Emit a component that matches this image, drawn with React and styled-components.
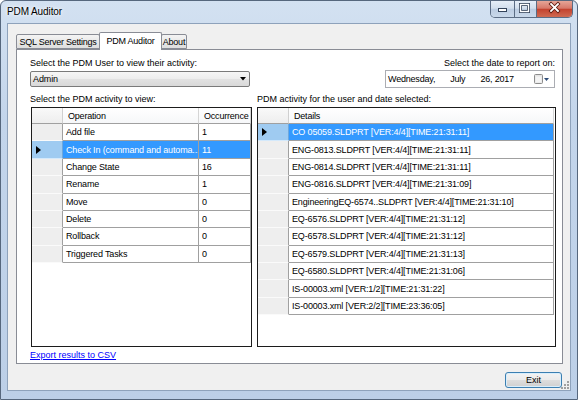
import React from 'react';
import styled, { createGlobalStyle } from 'styled-components';

const FONT = '"Liberation Sans", Arial, sans-serif';

const GlobalStyle = createGlobalStyle`
  html, body {
    margin: 0;
    padding: 0;
    background: #ffffff;
  }
  body {
    font-family: ${FONT};
    font-size: 9px;
    color: #000000;
  }
  * {
    box-sizing: border-box;
  }
`;

const operations = [
  { name: 'Add file', count: 1 },
  { name: 'Check In (command and automa...', count: 11, selected: true },
  { name: 'Change State', count: 16 },
  { name: 'Rename', count: 1 },
  { name: 'Move', count: 0 },
  { name: 'Delete', count: 0 },
  { name: 'Rollback', count: 0 },
  { name: 'Triggered Tasks', count: 0 },
];

const details = [
  'CO 05059.SLDPRT [VER:4/4][TIME:21:31:11]',
  'ENG-0813.SLDPRT [VER:4/4][TIME:21:31:11]',
  'ENG-0814.SLDPRT [VER:4/4][TIME:21:31:11]',
  'ENG-0816.SLDPRT [VER:4/4][TIME:21:31:09]',
  'EngineeringEQ-6574..SLDPRT [VER:4/4][TIME:21:31:10]',
  'EQ-6576.SLDPRT [VER:4/4][TIME:21:31:12]',
  'EQ-6578.SLDPRT [VER:4/4][TIME:21:31:12]',
  'EQ-6579.SLDPRT [VER:4/4][TIME:21:31:13]',
  'EQ-6580.SLDPRT [VER:4/4][TIME:21:31:06]',
  'IS-00003.xml [VER:1/2][TIME:21:31:22]',
  'IS-00003.xml [VER:2/2][TIME:23:36:05]',
];

function RowArrow() {
  return (
    <svg width="5" height="8" viewBox="0 0 5 8">
      <polygon points="0,0 5,4 0,8" fill="#000" />
    </svg>
  );
}

export default function App() {
  return (
    <>
      <GlobalStyle />
      <Window>
        <TitleBar>
          <Title>PDM Auditor</Title>
          <CaptionButtons>
            <CaptionButton $width={23}>
              <svg width="23" height="16" viewBox="0 0 23 16">
                <rect x="7.5" y="7.5" width="8" height="3" fill="#fff" stroke="#33435a" />
              </svg>
            </CaptionButton>
            <CaptionButton $width={22} $divider>
              <svg width="22" height="16" viewBox="0 0 22 16">
                <rect x="5.5" y="3.5" width="8" height="7" fill="none" stroke="#33435a" strokeWidth="3" />
                <rect x="5.5" y="3.5" width="8" height="7" fill="none" stroke="#fff" strokeWidth="1.4" />
              </svg>
            </CaptionButton>
            <CaptionButton $width={36} $close>
              <svg width="36" height="16" viewBox="0 0 36 16">
                <path d="M14 3 L21 10 M21 3 L14 10" stroke="#5a1a10" strokeWidth="3.4" strokeLinecap="square" />
                <path d="M14 3 L21 10 M21 3 L14 10" stroke="#fff" strokeWidth="1.8" strokeLinecap="square" />
              </svg>
            </CaptionButton>
          </CaptionButtons>
        </TitleBar>

        <Client>
          <TabArea>
            <TabStrip>
              <Tab $width={84}>SQL Server Settings</Tab>
              <Tab $width={63} $active>PDM Auditor</Tab>
              <Tab $width={26}>About</Tab>
            </TabStrip>
            <TabPanel>
              <TopRow>
                <Field>
                  <Label>Select the PDM User to view their activity:</Label>
                  <Combo>
                    <span>Admin</span>
                    <svg width="6" height="4" viewBox="0 0 6 4">
                      <polygon points="0,0 6,0 3,3.5" fill="#000" />
                    </svg>
                  </Combo>
                </Field>
                <Field $right>
                  <Label>Select the date to report on:</Label>
                  <DatePicker>
                    <DatePart>Wednesday,</DatePart>
                    <DatePart $gap={15}>July</DatePart>
                    <DatePart $gap={15}>26, 2017</DatePart>
                    <CalendarIcon width="15" height="10" viewBox="0 0 15 10">
                      <rect x="0.5" y="0.5" width="8" height="9" rx="1" fill="#e4e4e4" stroke="#8c8c8c" />
                      <rect x="1.5" y="2.5" width="6" height="6" fill="#f4f4f4" />
                      <polygon points="10,4 15,4 12.5,7" fill="#2f4d78" />
                    </CalendarIcon>
                  </DatePicker>
                </Field>
              </TopRow>

              <Lists>
                <ListColumn>
                  <Label>Select the PDM activity to view:</Label>
                  <Grid $width={221} $offset={1}>
                    <GridRow $header>
                      <CornerCell />
                      <HeaderCell $width={136}>Operation</HeaderCell>
                      <HeaderCell $width={52}>Occurrence</HeaderCell>
                    </GridRow>
                    {operations.map(op => (
                      <GridRow key={op.name}>
                        <RowHeaderCell $selected={op.selected}>
                          {op.selected && <RowArrow />}
                        </RowHeaderCell>
                        <Cell $width={136} $selected={op.selected}>{op.name}</Cell>
                        <Cell $width={52} $selected={op.selected}>{op.count}</Cell>
                      </GridRow>
                    ))}
                  </Grid>
                </ListColumn>

                <ListColumn>
                  <Label>PDM activity for the user and date selected:</Label>
                  <Grid $width={299}>
                    <GridRow $header>
                      <CornerCell />
                      <HeaderCell $width={265}>Details</HeaderCell>
                    </GridRow>
                    {details.map((line, i) => (
                      <GridRow key={line + i}>
                        <RowHeaderCell $selected={i === 0}>
                          {i === 0 && <RowArrow />}
                        </RowHeaderCell>
                        <Cell $width={265} $selected={i === 0}>{line}</Cell>
                      </GridRow>
                    ))}
                  </Grid>
                </ListColumn>
              </Lists>

              <ExportLink href="#">Export results to CSV</ExportLink>
            </TabPanel>
          </TabArea>

          <Footer>
            <ExitButton>Exit</ExitButton>
          </Footer>

          <SizeGrip width="8" height="8" viewBox="0 0 8 8">
            {[[6, 0], [6, 3], [3, 3], [6, 6], [3, 6], [0, 6]].map(([x, y]) => (
              <rect key={`${x}-${y}`} x={x} y={y} width="2" height="2" fill="#a0a0a0" />
            ))}
          </SizeGrip>
        </Client>
      </Window>
    </>
  );
}

const Window = styled.div`
  width: 578px;
  height: 400px;
  display: flex;
  flex-direction: column;
  border: 1px solid #56677d;
  border-radius: 6px 6px 0 0;
  background: linear-gradient(180deg, #d3e1f1 0%, #c3d5eb 30%, #bccfe7 100%);
`;

const TitleBar = styled.div`
  height: 22px;
  flex: 0 0 22px;
  display: flex;
  align-items: flex-start;
  justify-content: space-between;
  padding: 0 4px 0 6px;
`;

const Title = styled.div`
  margin-top: 5px;
  font-size: 10px;
  line-height: 12px;
  letter-spacing: -0.1px;
  color: #000;
  text-shadow: 0 0 6px #ffffff, 0 0 3px #ffffff;
`;

const CaptionButtons = styled.div`
  display: flex;
  height: 17px;
  border: 1px solid #5b6c84;
  border-top: none;
  border-radius: 0 0 5px 5px;
  overflow: hidden;
`;

const CaptionButton = styled.div`
  width: ${p => p.$width}px;
  height: 16px;
  border-left: ${p => (p.$divider || p.$close ? '1px solid #5b6c84' : 'none')};
  background: ${p =>
    p.$close
      ? 'linear-gradient(180deg, #e6a597 0%, #d7796a 45%, #c4432f 52%, #cf6a52 100%)'
      : 'linear-gradient(180deg, #e6eef8 0%, #d3dfed 45%, #bccde2 52%, #c9d8ea 100%)'};
  svg {
    display: block;
  }
`;

const Client = styled.div`
  position: relative;
  flex: 1;
  margin: 0 6px 8px 6px;
  border: 1px solid #8ea2bb;
  background: #f0f0f0;
  display: flex;
  flex-direction: column;
`;

const TabArea = styled.div`
  padding: 8px 7px 0 8px;
`;

const TabStrip = styled.div`
  display: flex;
  align-items: flex-end;
  height: 17px;
  padding-left: 1px;
`;

const Tab = styled.div`
  width: ${p => p.$width}px;
  height: ${p => (p.$active ? 18 : 15)}px;
  margin-left: -1px;
  margin-bottom: ${p => (p.$active ? -1 : 0)}px;
  position: relative;
  z-index: ${p => (p.$active ? 1 : 0)};
  display: flex;
  align-items: center;
  justify-content: center;
  padding-bottom: ${p => (p.$active ? 2 : 0)}px;
  border: 1px solid #898c95;
  border-bottom: ${p => (p.$active ? 'none' : '1px solid #898c95')};
  border-radius: 2px 2px 0 0;
  background: ${p =>
    p.$active ? '#ffffff' : 'linear-gradient(180deg, #f4f4f4 0%, #e9e9e9 50%, #dedede 100%)'};
  font-size: 9px;
  letter-spacing: -0.25px;
  white-space: nowrap;
`;

const TabPanel = styled.div`
  height: 315px;
  border: 1px solid #898c95;
  background: #ffffff;
  padding: 7px 6px 0 13px;
  display: flex;
  flex-direction: column;
`;

const TopRow = styled.div`
  display: flex;
  justify-content: space-between;
  align-items: flex-start;
  height: 31px;
`;

const Field = styled.div`
  display: flex;
  flex-direction: column;
  align-items: ${p => (p.$right ? 'flex-end' : 'flex-start')};
  gap: ${p => (p.$right ? 1 : 2)}px;
  margin-right: ${p => (p.$right ? 1 : 0)}px;
`;

const Label = styled.div`
  font-size: 9px;
  line-height: 12px;
  height: 12px;
  white-space: nowrap;
`;

const Combo = styled.div`
  width: 220px;
  height: 16px;
  display: flex;
  align-items: center;
  justify-content: space-between;
  padding: 0 2px 0 2px;
  border: 1px solid #7a7a7a;
  border-radius: 2px;
  background: linear-gradient(180deg, #f6f6f6 0%, #ededed 50%, #e2e2e2 51%, #d9d9d9 100%);
  font-size: 9px;
  letter-spacing: -0.1px;
  svg {
    margin-right: 1px;
  }
`;

const DatePicker = styled.div`
  width: 170px;
  height: 18px;
  display: flex;
  align-items: center;
  padding: 0 5px 0 2px;
  border: 1px solid #abadb3;
  background: #ffffff;
`;

const DatePart = styled.span`
  margin-left: ${p => p.$gap || 0}px;
  font-size: 9px;
  letter-spacing: -0.2px;
  white-space: nowrap;
`;

const CalendarIcon = styled.svg`
  margin-left: auto;
  display: block;
`;

const Lists = styled.div`
  display: grid;
  grid-template-columns: 222px 299px;
  column-gap: 5px;
  margin-top: 5px;
`;

const ListColumn = styled.div`
  display: flex;
  flex-direction: column;
  gap: 2px;
`;

const Grid = styled.div`
  width: ${p => p.$width}px;
  height: 240px;
  margin-left: ${p => p.$offset || 0}px;
  border: 1px solid #1c1c1c;
  background: #ffffff;
  overflow: hidden;
`;

const GridRow = styled.div`
  display: flex;
  height: ${p => (p.$header ? 16 : 17.375)}px;
`;

const CornerCell = styled.div`
  flex: 0 0 31px;
  background: linear-gradient(180deg, #f9f9f9 0%, #eeeeee 100%);
  border-right: 1px solid #d0d0d0;
  border-bottom: 1px solid #a0a0a0;
`;

const HeaderCell = styled.div`
  flex: 0 0 ${p => p.$width}px;
  display: flex;
  align-items: center;
  padding-left: 5px;
  background: linear-gradient(180deg, #ffffff 0%, #f6f7f9 100%);
  border-right: 1px solid #d5d5d5;
  border-bottom: 1px solid #a0a0a0;
  font-size: 9px;
  letter-spacing: -0.2px;
  white-space: nowrap;
  overflow: hidden;
`;

const RowHeaderCell = styled.div`
  flex: 0 0 31px;
  display: flex;
  align-items: center;
  padding-left: 4px;
  background: ${p => (p.$selected ? '#9fcbf1' : '#eeeeee')};
  border-right: 1px solid ${p => (p.$selected ? '#6fa8dc' : '#a0a0a0')};
  border-bottom: 1px solid ${p => (p.$selected ? '#d4e9fb' : '#fafafa')};
`;

const Cell = styled.div`
  flex: 0 0 ${p => p.$width}px;
  display: flex;
  align-items: center;
  padding: 0 3px;
  background: ${p => (p.$selected ? '#3399ff' : '#ffffff')};
  color: ${p => (p.$selected ? '#ffffff' : '#000000')};
  border-right: 1px solid #a0a0a0;
  border-bottom: 1px solid #a0a0a0;
  font-size: 9px;
  letter-spacing: -0.15px;
  white-space: nowrap;
  overflow: hidden;
`;

const ExportLink = styled.a`
  margin-top: 2px;
  font-size: 9px;
  line-height: 12px;
  color: #0000ff;
  text-decoration: underline;
  align-self: flex-start;
`;

const Footer = styled.div`
  display: flex;
  justify-content: flex-end;
  padding: 8px 8px 0 0;
`;

const ExitButton = styled.button`
  width: 57px;
  height: 16px;
  padding: 0;
  border: 1px solid #3c7fb1;
  border-radius: 3px;
  background: linear-gradient(180deg, #f3f3f3 0%, #ebebeb 50%, #dddddd 51%, #d0d0d0 100%);
  box-shadow: inset 0 0 0 1px #d8eefc;
  font-family: ${FONT};
  font-size: 9px;
  color: #000;
`;

const SizeGrip = styled.svg`
  position: absolute;
  right: 1px;
  bottom: 1px;
`;
